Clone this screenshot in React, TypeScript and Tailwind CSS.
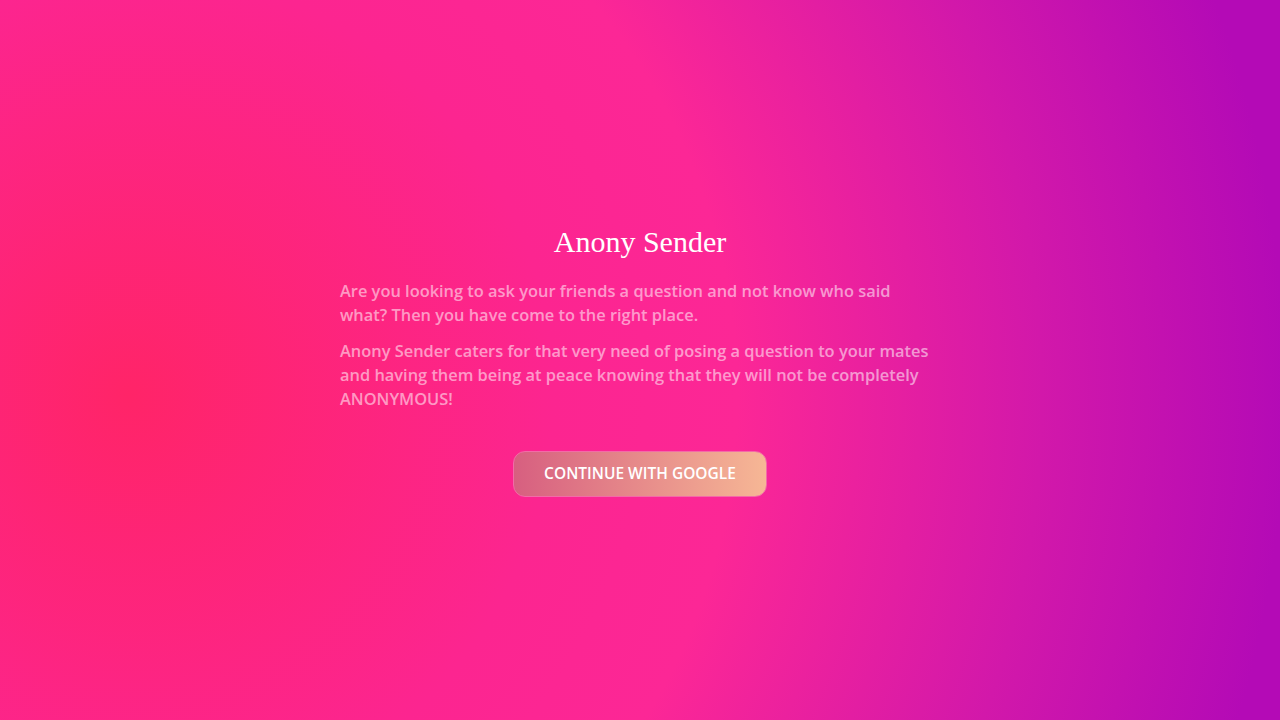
export default function App() {
  return (
    <main className="min-h-screen w-full flex items-center justify-center bg-[radial-gradient(circle_at_10%_55%,#ff2468_0%,#fc2590_35%,#fc2796_50%,#d218aa_75%,#b40ab6_95%)]">
      <div className="w-[600px] flex flex-col items-center">
        <h1 className="font-['Liberation_Serif',serif] text-[30px] leading-[36px] text-white">
          Anony Sender
        </h1>

        <div className="mt-[19px] w-full font-['Open_Sans',sans-serif] font-semibold text-[16.4px] leading-[24px] text-[#ffffff8c]">
          <p className="whitespace-nowrap">
            Are you looking to ask your friends a question and not know who said
            <br />
            what? Then you have come to the right place.
          </p>
          <p className="mt-[12px] whitespace-nowrap">
            Anony Sender caters for that very need of posing a question to your mates
            <br />
            and having them being at peace knowing that they will not be completely
            <br />
            ANONYMOUS!
          </p>
        </div>

        <button className="mt-[40px] h-[46px] w-[254px] rounded-[12px] border border-[#f36aa8] bg-[linear-gradient(90deg,#d75f80,#f6b795)] font-['Open_Sans',sans-serif] font-semibold text-[15.5px] text-white">
          CONTINUE WITH GOOGLE
        </button>
      </div>
    </main>
  );
}
